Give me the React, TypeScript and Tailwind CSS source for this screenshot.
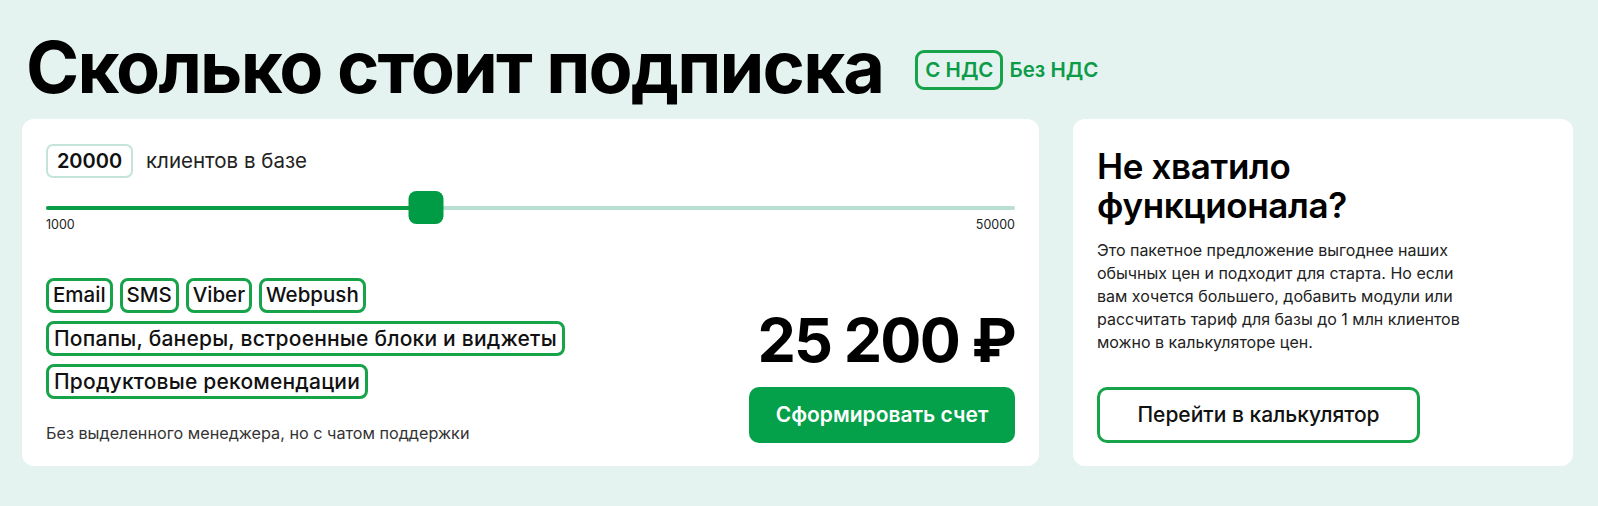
const MIN = 1000;
const MAX = 50000;
const THUMB = 35;

const channels = ["Email", "SMS", "Viber", "Webpush"];

function Tag({ children, wide }: { children: React.ReactNode; wide?: boolean }) {
  return (
    <span
      className={
        wide
          ? "inline-flex h-[35px] items-center rounded-[8px] border-[3px] border-[#16a34a] px-[5px] text-[21px] font-medium leading-none tracking-[0.01em] text-[#111]"
          : "inline-flex h-[35px] items-center rounded-[8px] border-[3px] border-[#16a34a] px-[4px] text-[20.5px] font-medium leading-none text-[#111]"
      }
    >
      {children}
    </span>
  );
}

function Slider({ value }: { value: number }) {
  const f = (value - MIN) / (MAX - MIN);
  const pos = `calc(${f} * (100% - ${THUMB}px) + ${THUMB / 2}px)`;
  return (
    <div className="mt-[13px]">
      <div className="relative flex h-[33px] items-center">
        <div className="h-[4px] w-full rounded-full bg-[#b9e0d3]">
          <div className="h-full rounded-full bg-[#0a9d47]" style={{ width: pos }} />
        </div>
        <div
          className="absolute top-0 h-[33px] w-[35px] -translate-x-1/2 rounded-[8px] bg-[#009b45]"
          style={{ left: pos }}
        />
      </div>
      <div className="-mt-[8px] flex justify-between text-[12.5px] text-[#222]">
        <span>1000</span>
        <span>50000</span>
      </div>
    </div>
  );
}

export default function App() {
  const clients = 20000;

  return (
    <div
      className="min-h-[506px] w-[1598px] bg-[#e4f3ef] px-[22px] pt-[27px] text-[#111]"
      style={{ fontFamily: "Inter, 'Noto Sans', sans-serif" }}
    >
      <div className="flex items-center gap-[32px]">
        <h1 className="ml-[4px] text-[72px] font-bold leading-[80px] tracking-[-0.025em] text-black">
          Сколько стоит подписка
        </h1>
        <div className="mt-[6px] flex items-center gap-[6px] text-[20.5px] font-semibold text-[#0c9b47]">
          <span className="flex h-[40px] items-center rounded-[9px] border-[3px] border-[#16a34a] px-[7px]">
            С НДС
          </span>
          <span>Без НДС</span>
        </div>
      </div>

      <div className="mt-[12px] flex gap-[34px]">
        <section className="flex h-[347px] w-[1017px] flex-col rounded-[12px] bg-white px-[24px] pb-[23px] pt-[25px]">
          <div className="flex items-center gap-[13px]">
            <span className="flex h-[34px] w-[87px] items-center justify-center rounded-[7px] border-2 border-[#c4e4da] text-[20px] font-semibold">
              {clients}
            </span>
            <span className="text-[20.5px] text-[#222]">клиентов в базе</span>
          </div>

          <Slider value={clients} />

          <div className="mt-auto flex items-end justify-between">
            <div>
              <div className="flex flex-col items-start gap-[8px]">
                <div className="flex gap-[7px]">
                  {channels.map((c) => (
                    <Tag key={c}>{c}</Tag>
                  ))}
                </div>
                <Tag wide>Попапы, банеры, встроенные блоки и виджеты</Tag>
                <Tag wide>Продуктовые рекомендации</Tag>
              </div>
              <p className="mt-[24px] text-[16.2px] leading-[20px] text-[#333]">
                Без выделенного менеджера, но с чатом поддержки
              </p>
            </div>

            <div className="flex flex-col items-end">
              <div className="text-[61px] font-bold leading-[62px] tracking-[-0.03em] text-black">
                25 200 ₽
              </div>
              <button className="mt-[16px] h-[56px] w-[266px] rounded-[10px] bg-[#04a04a] text-[21px] font-semibold text-white">
                Сформировать счет
              </button>
            </div>
          </div>
        </section>

        <aside className="flex h-[347px] w-[500px] flex-col rounded-[12px] bg-white px-[24px] pb-[23px] pt-[28px]">
          <h2 className="text-[35px] font-semibold leading-[39px] tracking-[-0.01em] text-black">
            Не хватило
            <br />
            функционала?
          </h2>
          <p className="mt-[14px] text-[16px] leading-[23px] text-[#222]">
            Это пакетное предложение выгоднее наших
            <br />
            обычных цен и подходит для старта. Но если
            <br />
            вам хочется большего, добавить модули или
            <br />
            рассчитать тариф для базы до 1 млн клиентов
            <br />
            можно в калькуляторе цен.
          </p>
          <button className="mt-auto h-[56px] w-[323px] rounded-[10px] border-[3px] border-[#16a34a] text-[21px] font-medium text-[#111]">
            Перейти в калькулятор
          </button>
        </aside>
      </div>
    </div>
  );
}
